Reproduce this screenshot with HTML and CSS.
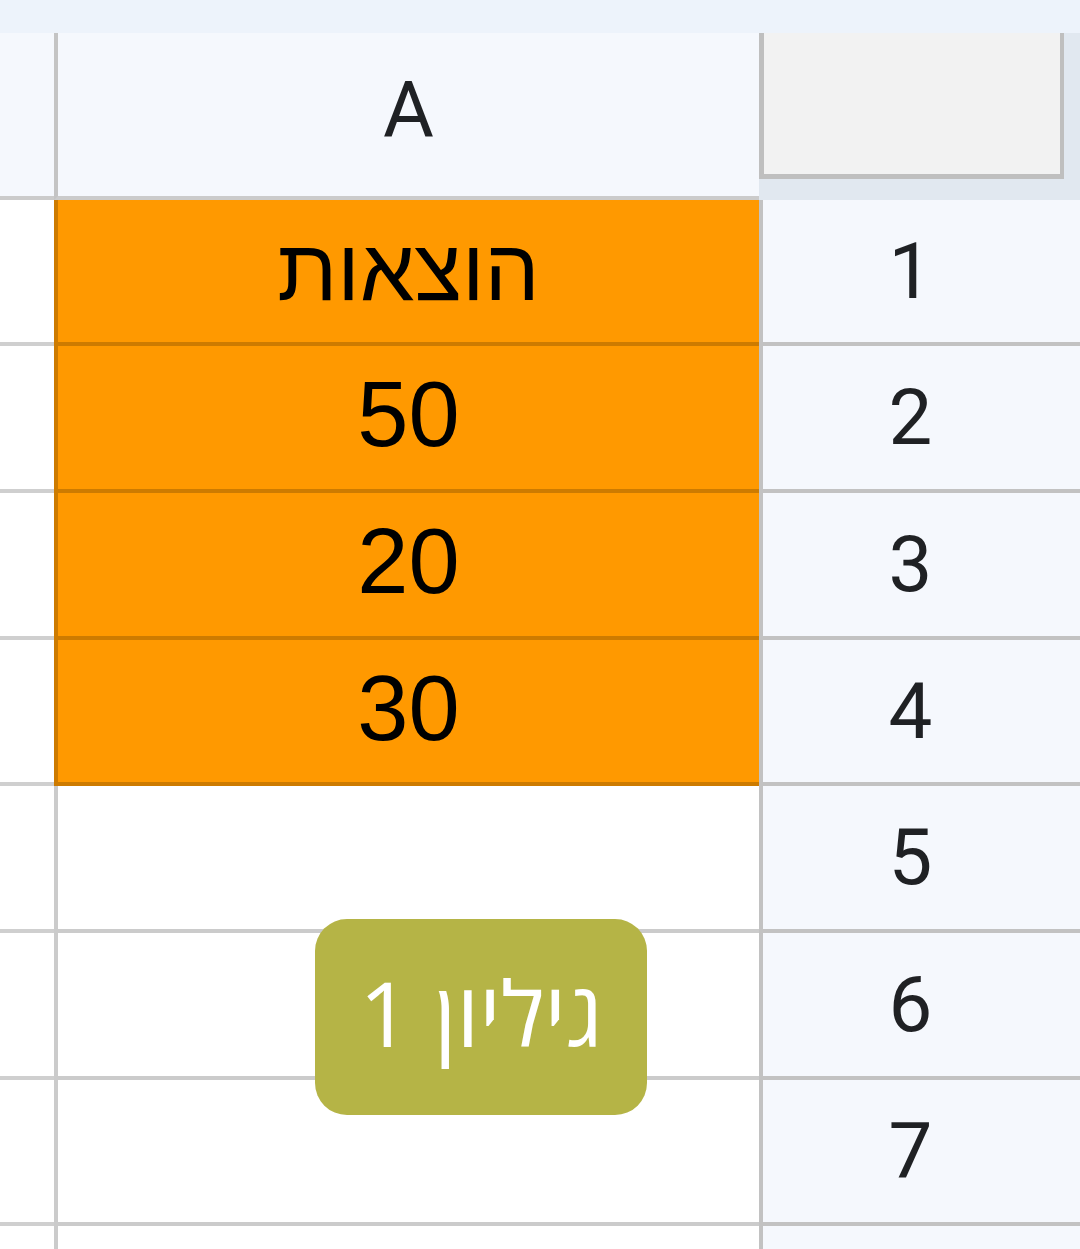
FILE: index.html
```html
<!DOCTYPE html>
<html lang="he">
<head>
<meta charset="utf-8">
<title>גיליון 1</title>
<link rel="stylesheet" href="styles.css">
</head>
<body>
<div class="topbar"></div>
<div class="sheet">
  <div class="stub stub-hdr"></div>
  <div class="col-hdr">A</div>
  <div class="corner"><div class="corner-box"></div></div>

  <div class="stub"></div>
  <div class="cell orange heb" dir="rtl">הוצאות</div>
  <div class="rowhdr">1</div>

  <div class="stub"></div>
  <div class="cell orange">50</div>
  <div class="rowhdr">2</div>

  <div class="stub"></div>
  <div class="cell orange">20</div>
  <div class="rowhdr">3</div>

  <div class="stub"></div>
  <div class="cell orange">30</div>
  <div class="rowhdr">4</div>

  <div class="stub"></div>
  <div class="cell"></div>
  <div class="rowhdr">5</div>

  <div class="stub"></div>
  <div class="cell"></div>
  <div class="rowhdr">6</div>

  <div class="stub"></div>
  <div class="cell"></div>
  <div class="rowhdr">7</div>

  <div class="stub stub-last"></div>
  <div class="cell cell-last"></div>
  <div class="rowhdr rowhdr-last"></div>
</div>
<div class="sheet-tab" dir="rtl">גיליון 1</div>
</body>
</html>
```
FILE: styles.css
```css
* { box-sizing: border-box; }
html, body {
  margin: 0;
  padding: 0;
  width: 1080px;
  height: 1249px;
  overflow: hidden;
  background: #ffffff;
  font-family: Roboto, "Liberation Sans", sans-serif;
}
.topbar {
  height: 33px;
  background: #edf3fb;
}
.sheet {
  display: grid;
  grid-template-columns: 54px 705px 321px;
  grid-template-rows: 167px 146px 147px 147px 146px 147px 147px 146px 23px;
}
.stub {
  background: #ffffff;
  border-bottom: 4px solid #cfcfcf;
}
.stub-hdr {
  background: #f5f8fd;
  border-bottom: 4px solid #cbcbcb;
}
.col-hdr {
  background: #f5f8fd;
  border-left: 4px solid #c4c4c4;
  border-bottom: 4px solid #cbcbcb;
  display: flex;
  align-items: center;
  justify-content: center;
  padding-bottom: 8px;
  font-family: Roboto, sans-serif;
  font-size: 78px;
  color: #1f2124;
}
.corner {
  background: #e1e8f0;
}
.corner-box {
  width: 305px;
  height: 146px;
  background: #f2f2f2;
  border-left: 5px solid #bfbfbf;
  border-right: 4px solid #bfbfbf;
  border-bottom: 5px solid #bfbfbf;
}
.cell {
  background: #ffffff;
  border-left: 4px solid #cbcbcb;
  border-bottom: 4px solid #cbcbcb;
  display: flex;
  align-items: center;
  justify-content: center;
  font-family: "Liberation Sans", Arial, sans-serif;
  font-size: 92px;
  color: #000000;
  padding-bottom: 6px;
}
.cell.orange {
  background: #ff9900;
  border-left-color: #cd7b00;
  border-bottom-color: #cd7b00;
}
.cell.heb {
  font-size: 87px;
  padding-bottom: 2px;
}
.rowhdr {
  background: #f5f8fd;
  border-left: 4px solid #c2c2c2;
  border-bottom: 4px solid #c2c2c2;
  display: flex;
  align-items: center;
  justify-content: center;
  font-family: Roboto, sans-serif;
  font-size: 78px;
  color: #1f2124;
  padding-right: 22px;
}
.stub-last, .cell-last, .rowhdr-last {
  border-bottom: none;
}
.sheet-tab {
  position: absolute;
  left: 315px;
  top: 919px;
  width: 332px;
  height: 196px;
  border-radius: 32px;
  background: #b5b446;
  color: #ffffff;
  display: flex;
  align-items: center;
  justify-content: center;
  font-family: "Open Sans", "Noto Sans", "DejaVu Sans", sans-serif;
  font-weight: 400;
  font-size: 90px;
  padding-bottom: 10px;
}
```
